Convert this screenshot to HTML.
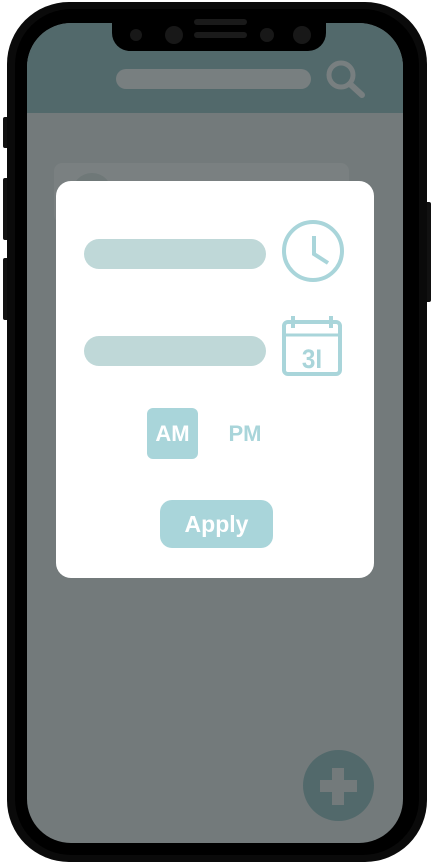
<!DOCTYPE html>
<html><head><meta charset="utf-8"><style>
html,body{margin:0;padding:0;width:433px;height:866px;background:#fff;overflow:hidden;position:relative;font-family:"Liberation Sans",sans-serif}
.abs{position:absolute}
</style></head><body>
<div class="abs" style="left:3px;top:117px;width:6px;height:31px;background:#111;border-radius:2px"></div>
<div class="abs" style="left:3px;top:178px;width:6px;height:62px;background:#111;border-radius:2px"></div>
<div class="abs" style="left:3px;top:258px;width:6px;height:62px;background:#111;border-radius:2px"></div>
<div class="abs" style="left:424px;top:202px;width:7px;height:100px;background:#111;border-radius:2px"></div>
<div class="abs" style="left:7px;top:2px;width:420px;height:860px;background:#0a0a0a;border-radius:62px"></div>
<div class="abs" style="left:15px;top:9px;width:404px;height:846px;background:#000;border-radius:56px"></div>
<div class="abs" style="left:27px;top:23px;width:376px;height:820px;background:#737a7b;border-radius:44px;overflow:hidden">
  <div class="abs" style="left:0;top:0;width:376px;height:90px;background:#52696b"></div>
  <div class="abs" style="left:89px;top:46px;width:195px;height:20px;background:#787f80;border-radius:10px"></div>
  <svg class="abs" style="left:295px;top:30px" width="50" height="50" viewBox="0 0 50 50">
    <circle cx="19" cy="22" r="12" fill="none" stroke="#787f80" stroke-width="5"/>
    <line x1="28" y1="31" x2="40" y2="42" stroke="#787f80" stroke-width="6" stroke-linecap="round"/>
  </svg>
  <div class="abs" style="left:27px;top:140px;width:295px;height:60px;background:#7a8081;border-radius:8px"></div>
  <div class="abs" style="left:45px;top:150px;width:40px;height:40px;background:#6f7878;border-radius:50%"></div>
  <div class="abs" style="left:276px;top:727px;width:71px;height:71px;background:#52696b;border-radius:50%"></div>
  <div class="abs" style="left:305px;top:745px;width:12px;height:37px;background:#737a7b"></div>
  <div class="abs" style="left:293px;top:757px;width:37px;height:12px;background:#737a7b"></div>
</div>
<div class="abs" style="left:112px;top:20px;width:214px;height:31px;background:#000;border-radius:0 0 18px 18px"></div>
<div class="abs" style="left:194px;top:19px;width:53px;height:6px;background:#1a1a1a;border-radius:3px"></div>
<div class="abs" style="left:194px;top:32px;width:53px;height:6px;background:#1a1a1a;border-radius:3px"></div>
<div class="abs" style="left:130px;top:29px;width:12px;height:12px;background:#181818;border-radius:50%"></div>
<div class="abs" style="left:165px;top:26px;width:18px;height:18px;background:#181818;border-radius:50%"></div>
<div class="abs" style="left:260px;top:28px;width:14px;height:14px;background:#181818;border-radius:50%"></div>
<div class="abs" style="left:293px;top:26px;width:18px;height:18px;background:#181818;border-radius:50%"></div>
<div class="abs" style="left:56px;top:181px;width:318px;height:397px;background:#fff;border-radius:15px"></div>
<div class="abs" style="left:84px;top:239px;width:182px;height:30px;background:#bfd8d8;border-radius:15px"></div>
<div class="abs" style="left:84px;top:336px;width:182px;height:30px;background:#bfd8d8;border-radius:15px"></div>
<svg class="abs" style="left:280px;top:220px" width="66" height="64" viewBox="0 0 66 64">
  <circle cx="33" cy="31" r="29" fill="none" stroke="#a9d5da" stroke-width="4"/>
  <polyline points="314,236 314,254 328,263" transform="translate(-280,-220)" fill="none" stroke="#a9d5da" stroke-width="4"/>
</svg>
<svg class="abs" style="left:280px;top:314px" width="66" height="64" viewBox="280 314 66 64">
  <rect x="284" y="322" width="56" height="52" rx="4" fill="none" stroke="#a9d5da" stroke-width="4"/>
  <line x1="284" y1="335" x2="340" y2="335" stroke="#a9d5da" stroke-width="3"/>
  <line x1="293" y1="316" x2="293" y2="328" stroke="#a9d5da" stroke-width="4"/>
  <line x1="331" y1="316" x2="331" y2="328" stroke="#a9d5da" stroke-width="4"/>
  <text x="312" y="368" text-anchor="middle" font-family="Liberation Sans Narrow, Liberation Sans" font-weight="bold" font-size="27" fill="#a9d5da" transform="translate(312,0) scale(0.9,1) translate(-312,0)">3I</text>
</svg>
<div class="abs" style="left:147px;top:408px;width:51px;height:51px;background:#a9d5da;border-radius:6px;color:#fff;font-weight:bold;font-size:22px;line-height:51px;text-align:center">AM</div>
<div class="abs" style="left:220px;top:408px;width:50px;height:51px;color:#a9d5da;font-weight:bold;font-size:22px;line-height:51px;text-align:center">PM</div>
<div class="abs" style="left:160px;top:500px;width:113px;height:48px;background:#a9d5da;border-radius:12px;color:#fff;font-weight:bold;font-size:23px;line-height:48px;text-align:center">Apply</div>
</body></html>
